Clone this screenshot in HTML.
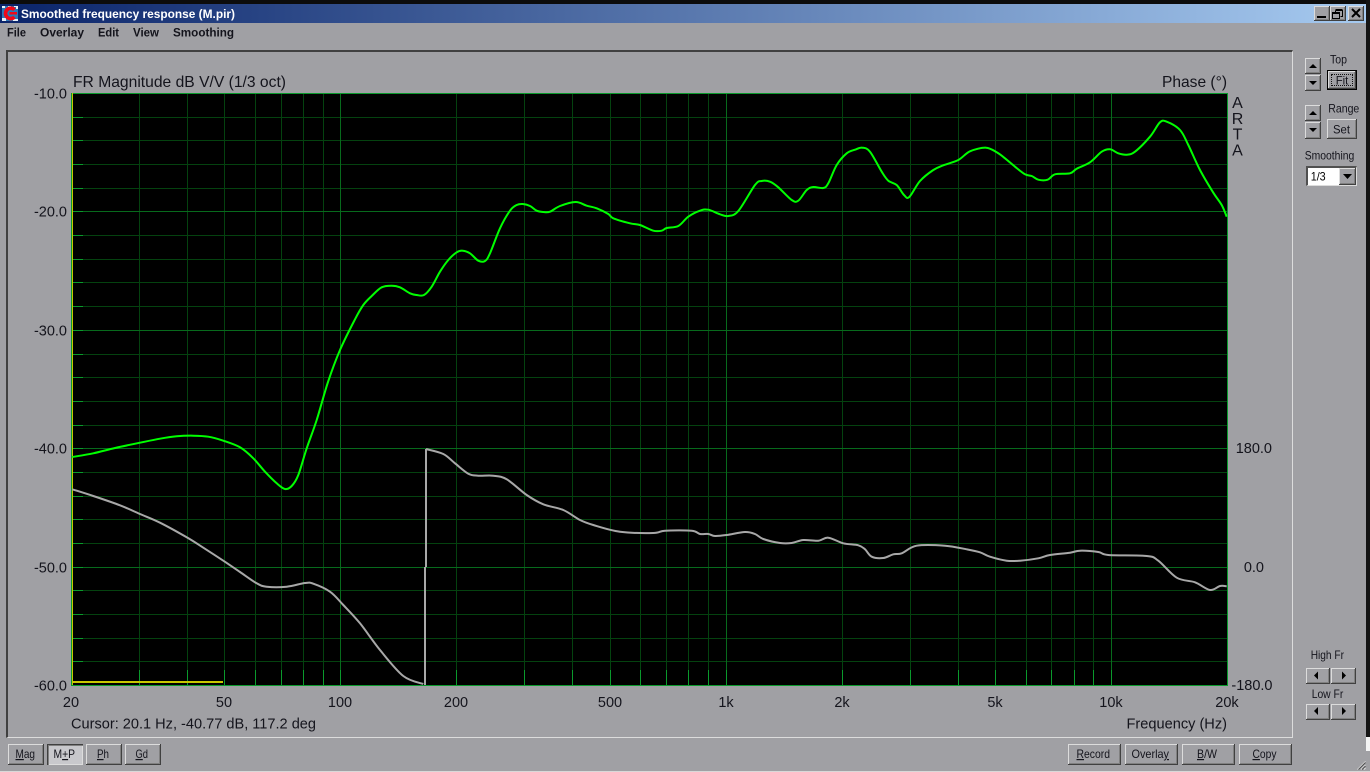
<!DOCTYPE html>
<html><head><meta charset="utf-8"><style>
html,body{margin:0;padding:0;background:#a0a0a4;overflow:hidden}
#w{position:relative;width:1370px;height:772px;background:#a0a0a4;overflow:hidden}
#w div{position:absolute;box-sizing:border-box}
.b{background:#a0a0a4;box-shadow:inset -1px -1px #404040,inset 1px 1px #dcdcdc,inset -2px -2px #808080}
svg{position:absolute;left:0;top:0}
text{font-family:"Liberation Sans",Arial,sans-serif;fill:#14141c}
.l{font-size:14.5px}
.s{font-size:12px}
.m{font-size:12px;font-weight:bold}
</style></head><body><div id="w">
<div style="left:0;top:0;width:1370px;height:4px;background:#0c0c0c"></div>
<div style="left:0;top:4px;width:1366px;height:19px;background:linear-gradient(90deg,#0a246a,#a6caf0)"></div>
<div style="left:1366px;top:0;width:4px;height:737px;background:#141414"></div>
<div style="left:1366px;top:737px;width:4px;height:14px;background:#f4f4f4"></div>
<div style="left:0;top:771px;width:1370px;height:1px;background:#d8d8d8"></div>
<!-- frame -->
<div style="left:6px;top:50px;width:1287px;height:688px;border-top:2px solid #404040;border-left:2px solid #404040;border-right:1px solid #dcdcdc;border-bottom:1px solid #dcdcdc"></div>
<!-- title buttons -->
<div class="b" style="left:1314px;top:6px;width:16px;height:15px"></div>
<div class="b" style="left:1330px;top:6px;width:16px;height:15px"></div>
<div class="b" style="left:1348px;top:6px;width:16px;height:15px"></div>
<!-- side buttons -->
<div class="b" style="left:1305px;top:58px;width:16px;height:16px"></div>
<div class="b" style="left:1305px;top:75px;width:16px;height:16px"></div>
<div style="left:1327px;top:70px;width:30px;height:20px;background:#000"></div>
<div class="b" style="left:1328px;top:71px;width:28px;height:18px"></div>
<div style="left:1331px;top:74px;width:22px;height:12px;border:1px dotted #111"></div>
<div class="b" style="left:1305px;top:105px;width:16px;height:16px"></div>
<div class="b" style="left:1305px;top:122px;width:16px;height:17px"></div>
<div class="b" style="left:1327px;top:119px;width:30px;height:20px"></div>
<div style="left:1306px;top:166px;width:51px;height:20px;background:#fff;border-top:2px solid #505050;border-left:2px solid #505050;border-right:1px solid #dcdcdc;border-bottom:1px solid #dcdcdc"></div>
<div class="b" style="left:1339px;top:168px;width:17px;height:17px"></div>
<div class="b" style="left:1306px;top:668px;width:24px;height:16px"></div>
<div class="b" style="left:1331px;top:668px;width:25px;height:16px"></div>
<div class="b" style="left:1306px;top:704px;width:24px;height:16px"></div>
<div class="b" style="left:1331px;top:704px;width:25px;height:16px"></div>
<!-- bottom buttons -->
<div class="b" style="left:8px;top:744px;width:36px;height:21px"></div>
<div style="left:47px;top:744px;width:36px;height:21px;background:#c8c8cc;box-shadow:inset 1px 1px #404040,inset 2px 2px #808080,inset -1px -1px #dcdcdc"></div>
<div class="b" style="left:86px;top:744px;width:36px;height:21px"></div>
<div class="b" style="left:125px;top:744px;width:36px;height:21px"></div>
<div class="b" style="left:1068px;top:744px;width:53px;height:21px"></div>
<div class="b" style="left:1125px;top:744px;width:53px;height:21px"></div>
<div class="b" style="left:1182px;top:744px;width:53px;height:21px"></div>
<div class="b" style="left:1239px;top:744px;width:53px;height:21px"></div>

<svg width="1370" height="772" viewBox="0 0 1370 772">
<!-- app icon -->
<rect x="2" y="6" width="16" height="15" fill="#2a78b8"/>
<path d="M2 6h3v2H2zM8 6h3v1H8zM14 6h4v3h-2V7h-2zM2 18h4v3H2zM13 19h5v2h-5z" fill="#e8f0f8"/>
<path d="M14.500 9.800A5.200 5.200 0 1 0 14.500 17" fill="none" stroke="#f00818" stroke-width="3.600"/>
<path d="M9.500 12h7.500v2.500H9.500z" fill="#f00818"/>
<!-- plot -->
<rect x="71" y="93" width="1157" height="593" fill="#000"/>
<g fill="#04420f">
<rect x="71" y="117" width="1156" height="1"/><rect x="71" y="140" width="1156" height="1"/><rect x="71" y="164" width="1156" height="1"/><rect x="71" y="188" width="1156" height="1"/>
<rect x="71" y="235" width="1156" height="1"/><rect x="71" y="259" width="1156" height="1"/><rect x="71" y="282" width="1156" height="1"/><rect x="71" y="306" width="1156" height="1"/>
<rect x="71" y="354" width="1156" height="1"/><rect x="71" y="377" width="1156" height="1"/><rect x="71" y="401" width="1156" height="1"/><rect x="71" y="425" width="1156" height="1"/>
<rect x="71" y="472" width="1156" height="1"/><rect x="71" y="496" width="1156" height="1"/><rect x="71" y="519" width="1156" height="1"/><rect x="71" y="543" width="1156" height="1"/>
<rect x="71" y="590" width="1156" height="1"/><rect x="71" y="614" width="1156" height="1"/><rect x="71" y="638" width="1156" height="1"/><rect x="71" y="661" width="1156" height="1"/>
<rect x="139" y="93" width="1" height="592"/><rect x="187" y="93" width="1" height="592"/><rect x="224" y="93" width="1" height="592"/><rect x="255" y="93" width="1" height="592"/><rect x="281" y="93" width="1" height="592"/><rect x="303" y="93" width="1" height="592"/><rect x="323" y="93" width="1" height="592"/>
<rect x="524" y="93" width="1" height="592"/><rect x="572" y="93" width="1" height="592"/><rect x="640" y="93" width="1" height="592"/><rect x="666" y="93" width="1" height="592"/><rect x="688" y="93" width="1" height="592"/><rect x="708" y="93" width="1" height="592"/>
<rect x="910" y="93" width="1" height="592"/><rect x="958" y="93" width="1" height="592"/><rect x="1026" y="93" width="1" height="592"/><rect x="1051" y="93" width="1" height="592"/><rect x="1074" y="93" width="1" height="592"/><rect x="1093" y="93" width="1" height="592"/>
<rect x="456" y="93" width="1" height="592"/><rect x="610" y="93" width="1" height="592"/><rect x="842" y="93" width="1" height="592"/><rect x="995" y="93" width="1" height="592"/>
</g>
<g fill="#076a1c">
<rect x="71" y="211" width="1156" height="1"/><rect x="71" y="330" width="1156" height="1"/><rect x="71" y="448" width="1156" height="1"/><rect x="71" y="567" width="1156" height="1"/>
<rect x="340" y="93" width="1" height="592"/><rect x="726" y="93" width="1" height="592"/><rect x="1111" y="93" width="1" height="592"/>
</g>
<g fill="#0a9a2c">
<rect x="71" y="93" width="1157" height="1"/><rect x="71" y="685" width="1157" height="1"/><rect x="71" y="93" width="1" height="593"/><rect x="1227" y="93" width="1" height="593"/>
<rect x="73" y="117" width="10" height="1"/><rect x="73" y="140" width="10" height="1"/><rect x="73" y="164" width="10" height="1"/><rect x="73" y="188" width="10" height="1"/><rect x="73" y="211" width="10" height="1"/><rect x="73" y="235" width="10" height="1"/><rect x="73" y="259" width="10" height="1"/><rect x="73" y="282" width="10" height="1"/><rect x="73" y="306" width="10" height="1"/><rect x="73" y="330" width="10" height="1"/><rect x="73" y="354" width="10" height="1"/><rect x="73" y="377" width="10" height="1"/><rect x="73" y="401" width="10" height="1"/><rect x="73" y="425" width="10" height="1"/><rect x="73" y="448" width="10" height="1"/><rect x="73" y="472" width="10" height="1"/><rect x="73" y="496" width="10" height="1"/><rect x="73" y="519" width="10" height="1"/><rect x="73" y="543" width="10" height="1"/><rect x="73" y="567" width="10" height="1"/><rect x="73" y="590" width="10" height="1"/><rect x="73" y="614" width="10" height="1"/><rect x="73" y="638" width="10" height="1"/><rect x="73" y="661" width="10" height="1"/>
<rect x="139" y="670" width="1" height="15"/><rect x="187" y="670" width="1" height="15"/><rect x="224" y="670" width="1" height="15"/><rect x="255" y="670" width="1" height="15"/><rect x="281" y="670" width="1" height="15"/><rect x="303" y="670" width="1" height="15"/><rect x="323" y="670" width="1" height="15"/><rect x="340" y="670" width="1" height="15"/><rect x="456" y="670" width="1" height="15"/><rect x="524" y="670" width="1" height="15"/><rect x="572" y="670" width="1" height="15"/><rect x="610" y="670" width="1" height="15"/><rect x="640" y="670" width="1" height="15"/><rect x="666" y="670" width="1" height="15"/><rect x="688" y="670" width="1" height="15"/><rect x="708" y="670" width="1" height="15"/><rect x="726" y="670" width="1" height="15"/><rect x="842" y="670" width="1" height="15"/><rect x="910" y="670" width="1" height="15"/><rect x="958" y="670" width="1" height="15"/><rect x="995" y="670" width="1" height="15"/><rect x="1026" y="670" width="1" height="15"/><rect x="1051" y="670" width="1" height="15"/><rect x="1074" y="670" width="1" height="15"/><rect x="1093" y="670" width="1" height="15"/><rect x="1111" y="670" width="1" height="15"/>
</g>
<rect x="72" y="93" width="1" height="592" fill="#c8c800"/>
<rect x="73" y="681" width="150" height="2" fill="#c8c800"/>
<!-- gray phase -->
<path d="M426 449V567M425 567V685" stroke="#a8a8a8" stroke-width="2" fill="none"/>
<polyline class="c" fill="none" stroke="#a8a8a8" stroke-width="2" stroke-linejoin="round" points="72.3,489.3 93.3,496 120,505.3 140,514 160,522.7 186.7,537.3 203.3,547.7 223.3,560.7 240,572 256.7,583.3 266.7,586.7 286.7,586.7 305,583 313.3,583.7 330,591.7 343.3,605 360,623.3 380,650 403.3,676 423.3,684"/>
<polyline class="c" fill="none" stroke="#a8a8a8" stroke-width="2" stroke-linejoin="round" points="426,449 443.3,454 455,463.3 468.3,473.7 478.3,475.7 493.3,475.7 506.7,479.3 526.7,495 543.3,504.3 563.3,510 580,520 593.3,525 620,531.7 653.3,533 665,530.7 691.7,530.7 700,534 708.3,534 715,536 726.7,535 745,532 755,534 763.3,539 780,543 791.7,543 803.3,540 818.3,540.7 828.3,537.7 843.3,543.3 858.3,545.3 865,549.3 871.7,556.7 883.3,558 893.3,554.3 901.7,553.3 916.7,545.7 945,545.7 966.7,549.3 980,552.3 990,556.7 1006.7,560.7 1020,560.7 1038.3,558.3 1050,555 1070,552.7 1080,550.7 1098.3,552 1108.3,555 1146.7,556 1158.3,560.7 1176.7,577.7 1195,582.3 1210,590 1220,586 1226.7,586.3"/>
<!-- green magnitude -->
<polyline class="c" fill="none" stroke="#00ff00" stroke-width="2" stroke-linejoin="round" points="72.3,457 93.3,453.3 115,448 140,442.7 160,438.7 176.7,436.3 193.3,435.7 208.3,436.7 223.3,440.7 240,447.3 253.3,458.3 265,471.7 276.7,483.3 285,489 291.7,486 298.3,475 306.7,448.3 316.7,420 328,382 340,350 355,319.3 363.3,305 371.7,296 381.7,287.3 391.7,285.7 400,287.3 410,293.3 416.7,295 424,295 431.7,286.7 440,271.7 448.3,260 456.7,252.3 462.7,250.7 470,253.3 478.3,260.7 485,261 490,253.3 500,228.3 510,210.7 516.7,205 522.7,204 530,206 536.7,210.7 543.3,212 550,211.7 560,206 575.7,202 586.7,205.7 596.7,208.3 608.3,214 613.3,218.3 630,223.3 640,225 653.3,230.7 661.7,230.7 666.7,228 678.3,226 688.3,216.7 700,210.7 708.3,209.7 720,214.3 728.3,216 738.3,211 755,185 761.7,181 770,181.7 778.3,187.3 791.7,200 798.3,200.7 806.7,190 813.3,187 823.3,188 828.3,183.3 836.7,165 846.7,153.3 855,149.7 862.3,147.7 870,151.7 881.7,171.7 888.3,180.7 896.7,185 904,195 909.3,197 920,181 933.3,170 943.3,165.3 958.3,160 970,151.3 986,147.7 996.7,152.3 1005,158.3 1015,166.7 1025,174.3 1031.7,176 1038.3,179.7 1047.7,179.7 1055,174.3 1070,173.3 1076.7,168.7 1090,162.3 1101.7,151.7 1110,149.3 1118.3,153.3 1126.7,154.7 1135,151.7 1150,136.7 1160,122.3 1166.7,121.7 1180,130 1188.3,145 1200,170 1213.3,192.7 1221.7,205 1226.7,216.7"/>
<!-- title / menu -->
<text x="21" y="18" class="m" style="fill:#fff" textLength="214" lengthAdjust="spacingAndGlyphs">Smoothed frequency response (M.pir)</text>
<text x="7" y="36.5" class="m" textLength="19" lengthAdjust="spacingAndGlyphs">File</text>
<text x="40" y="36.5" class="m" textLength="44" lengthAdjust="spacingAndGlyphs">Overlay</text>
<text x="98" y="36.5" class="m" textLength="21" lengthAdjust="spacingAndGlyphs">Edit</text>
<text x="133" y="36.5" class="m" textLength="26" lengthAdjust="spacingAndGlyphs">View</text>
<text x="173" y="36.5" class="m" textLength="61" lengthAdjust="spacingAndGlyphs">Smoothing</text>
<!-- plot labels -->
<text x="73" y="87" style="font-size:15.6px" textLength="213" lengthAdjust="spacingAndGlyphs">FR Magnitude dB V/V (1/3 oct)</text>
<text x="1162" y="87" style="font-size:16px" textLength="65" lengthAdjust="spacingAndGlyphs">Phase (°)</text>
<text x="67" y="98.5" class="l" text-anchor="end">-10.0</text>
<text x="67" y="216.5" class="l" text-anchor="end">-20.0</text>
<text x="67" y="335.5" class="l" text-anchor="end">-30.0</text>
<text x="67" y="453.5" class="l" text-anchor="end">-40.0</text>
<text x="67" y="572.5" class="l" text-anchor="end">-50.0</text>
<text x="67" y="690.5" class="l" text-anchor="end">-60.0</text>
<text x="1272" y="453" class="l" text-anchor="end">180.0</text>
<text x="1264" y="572" class="l" text-anchor="end">0.0</text>
<text x="1272.5" y="690" class="l" text-anchor="end">-180.0</text>
<text x="71" y="707" class="l" text-anchor="middle">20</text>
<text x="224" y="707" class="l" text-anchor="middle">50</text>
<text x="340" y="707" class="l" text-anchor="middle">100</text>
<text x="456" y="707" class="l" text-anchor="middle">200</text>
<text x="610" y="707" class="l" text-anchor="middle">500</text>
<text x="726" y="707" class="l" text-anchor="middle">1k</text>
<text x="842" y="707" class="l" text-anchor="middle">2k</text>
<text x="995" y="707" class="l" text-anchor="middle">5k</text>
<text x="1111" y="707" class="l" text-anchor="middle">10k</text>
<text x="1227" y="707" class="l" text-anchor="middle">20k</text>
<text x="1237.5" y="108" style="font-size:16px" text-anchor="middle">A</text>
<text x="1237.5" y="124" style="font-size:16px" text-anchor="middle">R</text>
<text x="1237.5" y="139.5" style="font-size:16px" text-anchor="middle">T</text>
<text x="1237.5" y="155.5" style="font-size:16px" text-anchor="middle">A</text>
<text x="71" y="728.5" class="l" textLength="245" lengthAdjust="spacingAndGlyphs">Cursor: 20.1 Hz, -40.77 dB, 117.2 deg</text>
<text x="1126.5" y="728.5" class="l" textLength="100.5" lengthAdjust="spacingAndGlyphs">Frequency (Hz)</text>
<!-- side labels -->
<text x="1330" y="63.3" class="s" textLength="17" lengthAdjust="spacingAndGlyphs">Top</text>
<text x="1328.3" y="112.3" class="s" textLength="31" lengthAdjust="spacingAndGlyphs">Range</text>
<text x="1304.7" y="159.3" class="s" textLength="49.600" lengthAdjust="spacingAndGlyphs">Smoothing</text>
<text x="1310.700" y="180.700" style="font-size:12px;fill:#000" textLength="15" lengthAdjust="spacingAndGlyphs">1/3</text>
<text x="1310.700" y="659" class="s" textLength="33.300" lengthAdjust="spacingAndGlyphs">High Fr</text>
<text x="1311.700" y="698" class="s" textLength="31.600" lengthAdjust="spacingAndGlyphs">Low Fr</text>
<text x="1335.700" y="84.700" class="s" textLength="12.600" lengthAdjust="spacingAndGlyphs">Fit</text>
<text x="1333" y="133.300" class="s" textLength="17" lengthAdjust="spacingAndGlyphs">Set</text>
<!-- arrows -->
<g fill="#000">
<path d="M1309 68h8l-4-4zM1309 81h8l-4 4zM1309 115h8l-4-4zM1309 128h8l-4 4zM1343 174h9l-4.500 5zM1318 671.500v8l-4-4zM1342 671.500v8l4-4zM1318 707v8l-4-4zM1342 707v8l4-4z"/>
<rect x="1317" y="16" width="9" height="2"/>
</g>
<!-- restore and close -->
<path d="M1335.500 10.500h7v6h-2M1335.500 10.500v2M1335.500 9.500h7" fill="none" stroke="#000"/>
<rect x="1332.500" y="12.500" width="7" height="6" fill="none" stroke="#000"/>
<path d="M1332.500 13.500h7" stroke="#000"/>
<path d="M1352 9l8 8M1360 9l-8 8" stroke="#000" stroke-width="2"/>
<!-- bottom button labels -->
<text x="15.500" y="758" class="s" textLength="19.500" lengthAdjust="spacingAndGlyphs"><tspan text-decoration="underline">M</tspan>ag</text>
<text x="53.500" y="758" class="s" textLength="21.500" lengthAdjust="spacingAndGlyphs">M<tspan text-decoration="underline">+</tspan>P</text>
<text x="97" y="758" class="s" textLength="12" lengthAdjust="spacingAndGlyphs"><tspan text-decoration="underline">P</tspan>h</text>
<text x="135.500" y="758" class="s" textLength="12.500" lengthAdjust="spacingAndGlyphs"><tspan text-decoration="underline">G</tspan>d</text>
<text x="1076.500" y="758" class="s" textLength="33.500" lengthAdjust="spacingAndGlyphs"><tspan text-decoration="underline">R</tspan>ecord</text>
<text x="1131.500" y="758" class="s" textLength="37.500" lengthAdjust="spacingAndGlyphs">Overla<tspan text-decoration="underline">y</tspan></text>
<text x="1197" y="758" class="s" textLength="20" lengthAdjust="spacingAndGlyphs"><tspan text-decoration="underline">B</tspan>/W</text>
<text x="1252.500" y="758" class="s" textLength="24" lengthAdjust="spacingAndGlyphs"><tspan text-decoration="underline">C</tspan>opy</text>
<!-- grip -->
<path d="M1357.500 769.500l8-8M1361 769.500l4.500-4.500M1364 769.500l1.500-1.500" stroke="#e0e0e0" fill="none"/>
<path d="M1358.500 769.500l7-7M1362 769.500l3.500-3.500" stroke="#505050" fill="none"/>
</svg>
<script>
document.querySelectorAll('polyline.c').forEach(function(l){
var p=l.getAttribute('points').trim().split(/\s+/).map(function(s){return s.split(',').map(Number)});
var d='M'+p[0][0]+' '+p[0][1];
for(var i=0;i<p.length-1;i++){
var a=p[Math.max(i-1,0)],b=p[i],c=p[i+1],e=p[Math.min(i+2,p.length-1)];
d+='C'+(b[0]+(c[0]-a[0])/6).toFixed(2)+' '+(b[1]+(c[1]-a[1])/6).toFixed(2)+' '+(c[0]-(e[0]-b[0])/6).toFixed(2)+' '+(c[1]-(e[1]-b[1])/6).toFixed(2)+' '+c[0]+' '+c[1];
}
var n=document.createElementNS('http://www.w3.org/2000/svg','path');
n.setAttribute('d',d);n.setAttribute('fill','none');n.setAttribute('stroke',l.getAttribute('stroke'));n.setAttribute('stroke-width',l.getAttribute('stroke-width'));
l.parentNode.replaceChild(n,l);
});
</script>
</div></body></html>
